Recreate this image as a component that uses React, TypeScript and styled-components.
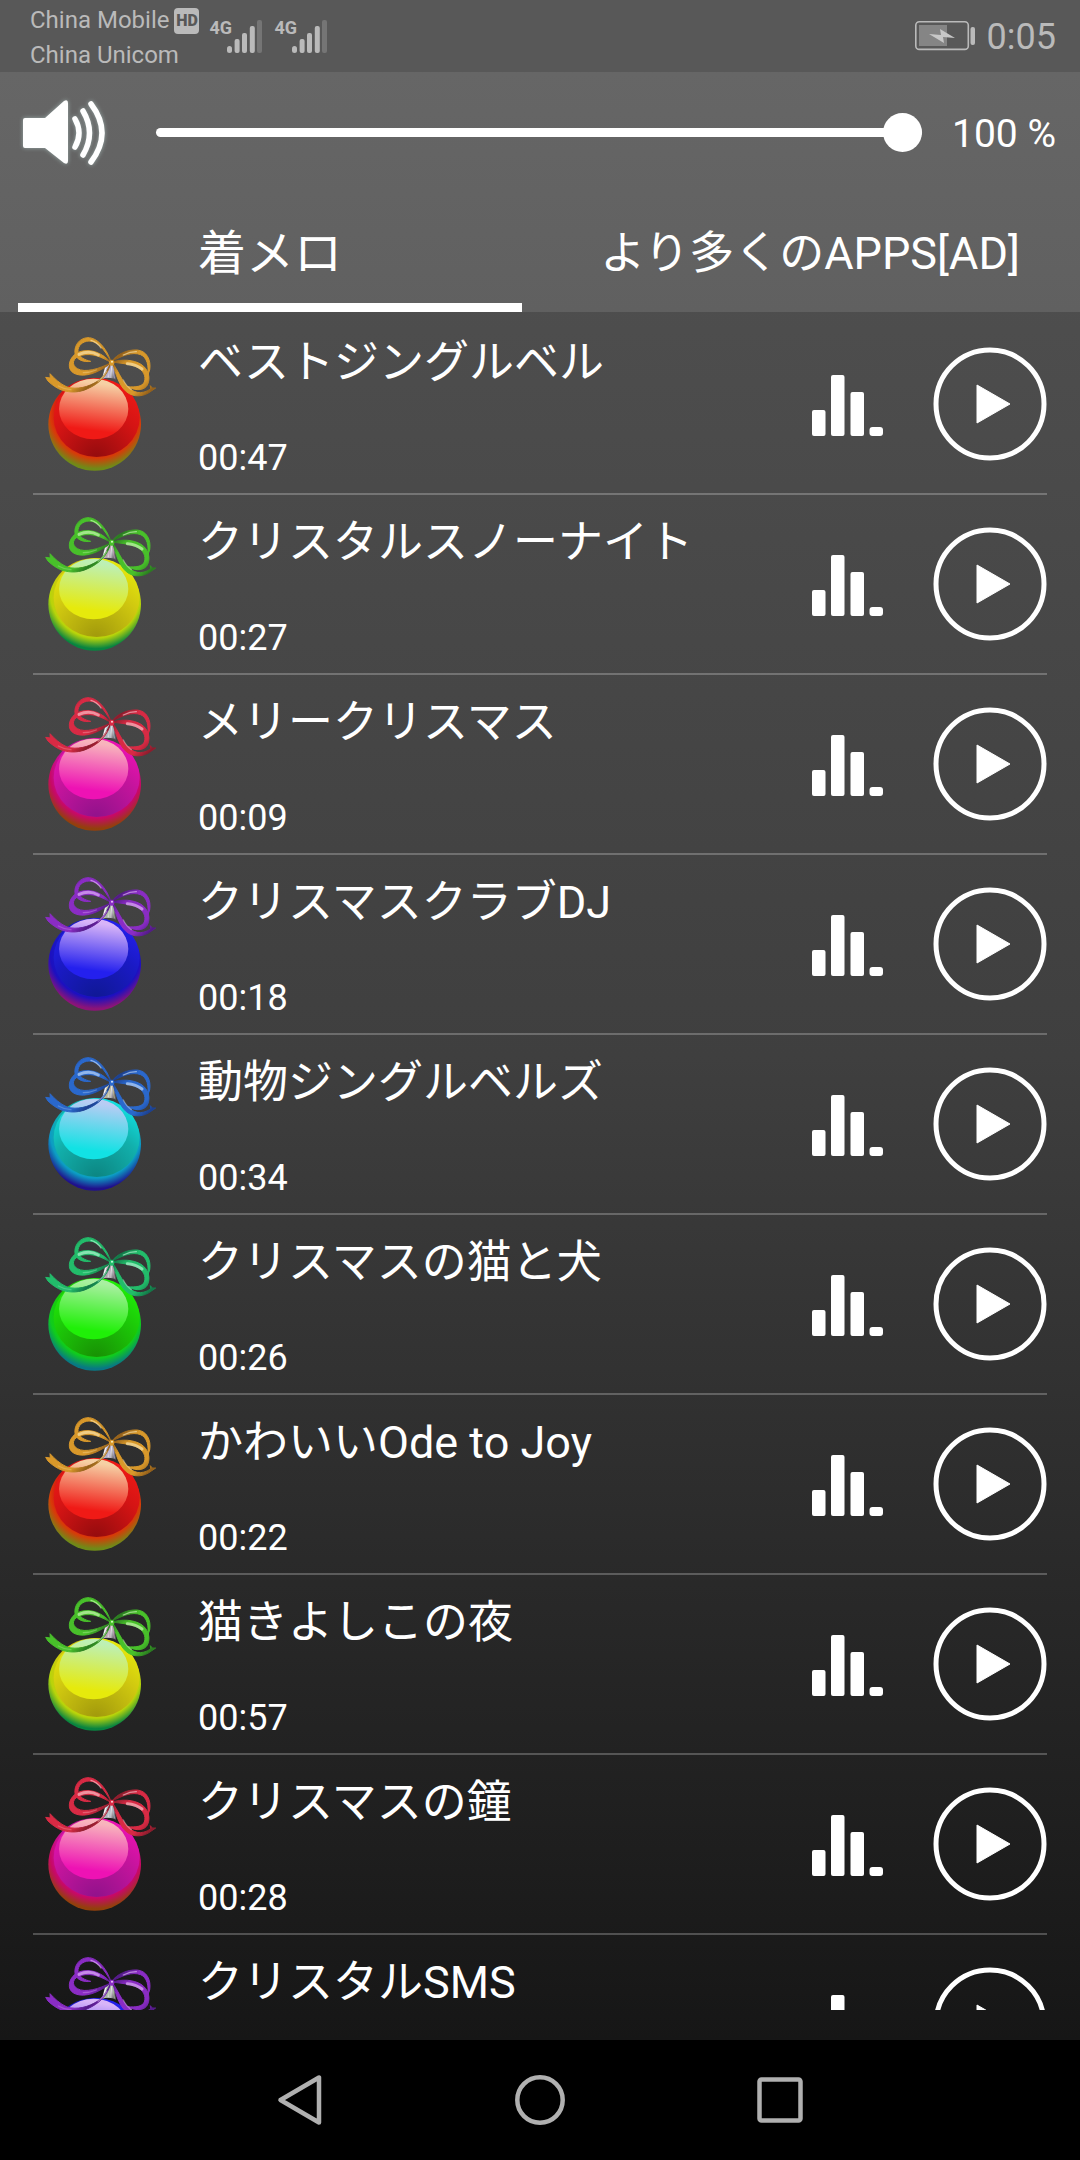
import React, { useState } from "react";
import styled, { createGlobalStyle } from "styled-components";

const GlobalStyle = createGlobalStyle`
  *, *::before, *::after { box-sizing: border-box; }
  html, body { margin: 0; background: #000; }
  body, button, input {
    font-family: Roboto, "Noto Sans CJK JP", sans-serif;
  }
  button {
    padding: 0;
    border: 0;
    background: none;
    color: inherit;
    cursor: pointer;
  }
  svg { display: block; flex: none; }
`;

const Screen = styled.div`
  display: flex;
  flex-direction: column;
  height: 100vh;
  color: #fff;
`;

const StatusBar = styled.header`
  display: flex;
  align-items: center;
  justify-content: space-between;
  height: 72px;
  padding: 0 24px 0 30px;
  background: #585858;
  color: #bababa;
`;

const StatusGroup = styled.div`
  display: flex;
  align-items: center;
  gap: 12px;
`;

const Carriers = styled.div`
  padding-top: 4px;
  font-size: 24px;
  line-height: 35px;
`;

const Carrier = styled.div`
  display: flex;
  align-items: center;
  gap: 5px;
  height: 35px;
`;

const HdBadge = styled.span`
  width: 25px;
  height: 26px;
  border-radius: 4px;
  background: #bababa;
  color: #585858;
  font-size: 16px;
  font-weight: 900;
  line-height: 26px;
  text-align: center;
`;

const Signals = styled.div`
  display: flex;
  gap: 12px;
  margin-left: -2px;
`;

const Signal = styled.div`
  display: flex;
  align-items: flex-start;
  width: 53px;
  font-family: "Liberation Sans Narrow", Roboto, sans-serif;
  font-size: 18px;
  font-weight: 700;
  line-height: 18px;

  span { width: 18px; }
`;

const Clock = styled.time`
  padding-top: 2px;
  font-size: 36px;
  line-height: 42px;
`;

const Content = styled.main`
  display: flex;
  flex: 1;
  flex-direction: column;
  min-height: 0;
  padding-bottom: 30px;
  background: linear-gradient(#525252, #3f3f3f 50%, #161616);
`;

const Controls = styled.section`
  flex: none;
  background: linear-gradient(#666, #606060);
`;

const VolumeRow = styled.div`
  display: flex;
  align-items: center;
  height: 120px;
  padding: 0 24px 0 18px;
`;

const Slider = styled.input`
  flex: 1;
  min-width: 0;
  height: 39px;
  margin: 0 30px 0 48px;
  appearance: none;
  background: transparent;

  &::-webkit-slider-runnable-track {
    height: 9px;
    border-radius: 5px;
    background: #fff;
  }
  &::-webkit-slider-thumb {
    width: 39px;
    height: 39px;
    margin-top: -15px;
    border-radius: 50%;
    appearance: none;
    background: #fff;
  }
`;

const VolumeValue = styled.output`
  min-width: 104px;
  padding-top: 4px;
  font-size: 39px;
  line-height: 46px;
  text-align: right;
`;

const Tabs = styled.div`
  display: grid;
  grid-template-columns: 1fr 1fr;
  gap: 36px;
  height: 120px;
  padding: 0 18px;
`;

const Tab = styled.button<{ $active: boolean; $large?: boolean }>`
  padding-top: 12px;
  border-bottom: 9px solid ${(p) => (p.$active ? "#fff" : "transparent")};
  font-size: ${(p) => (p.$large ? 48 : 45)}px;
  line-height: 54px;
  white-space: nowrap;
`;

const TrackList = styled.ul`
  flex: 1;
  min-height: 0;
  margin: 0;
  padding: 3px 33px 0;
  overflow-y: auto;
  list-style: none;
  scrollbar-width: none;
`;

const TrackRow = styled.li`
  display: flex;
  align-items: center;
  height: 180px;
  border-bottom: 2px solid rgba(255, 255, 255, 0.24);
`;

const TrackText = styled.div`
  display: flex;
  flex: 1;
  flex-direction: column;
  align-self: stretch;
  justify-content: space-between;
  min-width: 0;
  padding: 21px 0 14px 28px;
`;

const TrackTitle = styled.span`
  font-size: 45px;
  line-height: 54px;
  white-space: nowrap;
`;

const Duration = styled.time`
  font-size: 36px;
  line-height: 42px;
`;

const Level = styled.span`
  padding-top: 3px;
`;

const PlayButton = styled.button`
  margin-left: 50px;
`;

const NavBar = styled.nav`
  display: flex;
  flex: none;
  justify-content: center;
  height: 120px;
  background: #000;
`;

const NavButton = styled.button`
  display: flex;
  flex: 0 1 240px;
  align-items: center;
  justify-content: center;
`;

interface Palette {
  ribbon: string;
  ribbonDark: string;
  shine: string;
  cap: string;
  top: string;
  bright: string;
  side: string;
  deep: string;
  ring: string;
  rim: string;
}

const palettes: Palette[] = [
  { ribbon: "#d8982a", ribbonDark: "#94601a", shine: "#fff0c0", cap: "#aaa6c8", top: "#f6d0a4", bright: "#f01a16", side: "#d41414", deep: "#980c0e", ring: "#d83a08", rim: "#6f8a18" },
  { ribbon: "#48c02a", ribbonDark: "#2a7c20", shine: "#dcffc8", cap: "#b79cac", top: "#bdf0b4", bright: "#e6ea0c", side: "#d0c810", deep: "#a49c0c", ring: "#b8d40a", rim: "#088440" },
  { ribbon: "#d82a44", ribbonDark: "#8c1c2c", shine: "#ffd6dc", cap: "#a4b2bc", top: "#f8b4bc", bright: "#ee12b4", side: "#c4149c", deep: "#94128c", ring: "#c80868", rim: "#92400c" },
  { ribbon: "#8a2cc4", ribbonDark: "#521a88", shine: "#edc8ff", cap: "#a3b49c", top: "#d8b4f8", bright: "#2420ee", side: "#1a1ac4", deep: "#101898", ring: "#1c10c0", rim: "#8c1478" },
  { ribbon: "#2a68cc", ribbonDark: "#1c4090", shine: "#d4e8ff", cap: "#b4b08c", top: "#b8ccf4", bright: "#12e2e4", side: "#12b0ac", deep: "#0c8884", ring: "#0c9cc4", rim: "#20108c" },
  { ribbon: "#22bc6a", ribbonDark: "#127848", shine: "#c8ffe0", cap: "#ac9ca8", top: "#a8f0a0", bright: "#20f008", side: "#1cc808", deep: "#189404", ring: "#10cc1c", rim: "#087884" },
];

interface Track {
  title: string;
  duration?: string;
  palette: number;
}

const tracks: Track[] = [
  { title: "ベストジングルベル", duration: "00:47", palette: 0 },
  { title: "クリスタルスノーナイト", duration: "00:27", palette: 1 },
  { title: "メリークリスマス", duration: "00:09", palette: 2 },
  { title: "クリスマスクラブDJ", duration: "00:18", palette: 3 },
  { title: "動物ジングルベルズ", duration: "00:34", palette: 4 },
  { title: "クリスマスの猫と犬", duration: "00:26", palette: 5 },
  { title: "かわいいOde to Joy", duration: "00:22", palette: 0 },
  { title: "猫きよしこの夜", duration: "00:57", palette: 1 },
  { title: "クリスマスの鐘", duration: "00:28", palette: 2 },
  { title: "クリスタルSMS", palette: 3 },
];

function Ornament({ id, colors: c }: { id: string; colors: Palette }) {
  return (
    <svg width="137" height="160" viewBox="9 -3 411 480" aria-hidden="true">
      <defs>
        <radialGradient id={`${id}-body`} gradientUnits="userSpaceOnUse" cx="198" cy="262" r="176">
          <stop offset="0.66" stopColor={c.side} />
          <stop offset="0.78" stopColor={c.ring} />
          <stop offset="0.96" stopColor={c.rim} />
        </radialGradient>
        <radialGradient id={`${id}-inner`} gradientUnits="userSpaceOnUse" cx="200" cy="400" r="240">
          <stop offset="0.05" stopColor={c.deep} />
          <stop offset="0.6" stopColor={c.side} />
          <stop offset="1" stopColor={c.bright} />
        </radialGradient>
        <linearGradient id={`${id}-gloss`} x1="0.6" y1="0" x2="0.45" y2="1">
          <stop offset="0.08" stopColor={c.top} />
          <stop offset="0.85" stopColor={c.bright} />
        </linearGradient>
        <linearGradient id={`${id}-cap`} x1="0" y1="0" x2="1" y2="0.3">
          <stop offset="0" stopColor="#5c5860" />
          <stop offset="0.3" stopColor="#f4f2f6" />
          <stop offset="0.5" stopColor={c.cap} />
          <stop offset="0.7" stopColor="#e6e4ea" />
          <stop offset="1" stopColor="#68646c" />
        </linearGradient>
        <linearGradient id={`${id}-ribbon`} gradientUnits="userSpaceOnUse" x1="120" y1="40" x2="170" y2="90" spreadMethod="reflect">
          <stop offset="0" stopColor={c.ribbonDark} />
          <stop offset="0.45" stopColor={c.ribbon} />
          <stop offset="1" stopColor={c.ribbon} />
        </linearGradient>
      </defs>
      <circle cx="194" cy="298" r="139" fill={`url(#${id}-body)`} />
      <ellipse cx="200" cy="278" rx="129" ry="118" fill={`url(#${id}-inner)`} />
      <ellipse cx="191" cy="252" rx="104" ry="91" fill={`url(#${id}-gloss)`} />
      <path d="M226 122q15-8 27 2l5 40q-18-10-42-3z" fill={`url(#${id}-cap)`} />
      <path d="M233 124l-9 35M241 123l-2 36M248 124l5 36" stroke={c.cap} strokeWidth="3" />
      <g fill={`url(#${id}-ribbon)`} fillRule="evenodd" stroke={`url(#${id}-ribbon)`} strokeWidth="3" strokeLinejoin="round">
        <path d="M243 110C228 66 200 38 174 38c-27 1-42 24-39 48 5 20 28 26 47 23-17-4-35-12-38-29-1-18 13-31 33-32 26 0 47 26 66 62z" />
        <path d="M243 113C217 84 185 71 153 79c-29 8-40 36-33 53 9 21 45 24 79 9 17-8 34-18 44-28-35 19-78 31-101 18-19-11-15-33 12-40 32-8 62 5 89 22z" />
        <path d="M246 108C261 88 291 73 321 75c29 2 43 30 38 60-2 6-4 10-5 14 2-27-2-51-22-60-26-10-55 4-86 19z" />
        <path d="M246 111c29-9 65-7 87 7 22 14 28 39 21 58-8 21-35 23-61 9 24 2 44 0 50-14 6-18-3-37-27-47-21-8-44-9-70-13z" />
        <path d="M242 113c-7 37-36 64-69 78-23 11-50 13-76 5-16-6-31-16-43-28l-7-11 14 2-1-13c13 14 30 31 51 40 31 9 64 0 91-17 20-14 32-35 40-56z" />
        <path d="M247 112c16 24 27 51 42 69 20 23 44 30 73 11l-1-10 6 7 10 0-13 9c-22 18-53 20-75 2-22-19-30-49-42-88z" />
      </g>
      <g fill="none" stroke={c.shine} strokeLinecap="round" strokeWidth="4" opacity="0.6">
        <path d="M147 88q31-13 58 2" strokeWidth="9" />
        <path d="M292 116q26 2 44 16" strokeWidth="9" />
        <path d="M183 46q18 5 30 23" />
        <path d="M280 90q20-10 39-10" />
        <path d="M160 143q20 0 39-8" opacity="0.5" />
        <path d="M205 169q17-13 25-30" opacity="0.7" />
        <path d="M280 165q10 20 24 29" opacity="0.7" />
        <path d="M85 183q17 10 38 11" opacity="0.4" />
      </g>
      <ellipse cx="245" cy="113" rx="8" ry="9" fill={c.ribbon} />
      <circle cx="246" cy="110" r="3" fill={c.shine} />
    </svg>
  );
}

function SignalBars() {
  return (
    <svg width="35" height="34" viewBox="0 0 35 34" fill="currentColor" aria-hidden="true">
      <rect x="0" y="27" width="5" height="7" rx="2.5" />
      <rect x="7.6" y="20" width="5" height="14" rx="2" />
      <rect x="15" y="14" width="5" height="20" rx="2" />
      <rect x="22.8" y="7" width="5" height="27" rx="2" />
      <rect x="30" y="1" width="5" height="33" rx="2" opacity="0.3" />
    </svg>
  );
}

function BatteryIcon() {
  return (
    <svg width="60" height="30" viewBox="0 0 60 30" aria-hidden="true">
      <rect x="0.8" y="0.8" width="52.500" height="27.6" rx="3.5" fill="none" stroke="#bababa" strokeWidth="1.6" />
      <rect x="4" y="4" width="28" height="21" fill="#858585" />
      <rect x="55.500" y="6" width="4.5" height="18" rx="2" fill="#bababa" />
      <path d="M14 13l12 1-1-6 15 9-12-1 1 6z" fill="#c8c8c8" />
    </svg>
  );
}

function SpeakerIcon() {
  return (
    <svg
      width="90"
      height="76"
      viewBox="0 0 90 76"
      aria-hidden="true"
      style={{ filter: "drop-shadow(0 0 2px rgba(220,255,250,.45))" }}
    >
      <path d="M7 24h20L46 7q4-2 4 2v58q0 4-4 2L27 54H7q-2 0-2-2V26q0-2 2-2z" fill="#fff" />
      <g fill="none" stroke="#fff" strokeLinecap="round" strokeWidth="5.5">
        <path d="M57 25q8 14 0 28" />
        <path d="M65 17q13 22 0 44" />
        <path d="M73 10q22 29 0 58" />
      </g>
    </svg>
  );
}

function EqualizerIcon() {
  return (
    <svg width="71" height="61" viewBox="0 0 71 61" fill="#fff" aria-hidden="true">
      <rect x="0" y="35" width="13.5" height="26" rx="2" />
      <rect x="19" y="0" width="13.5" height="61" rx="2" />
      <rect x="38.5" y="17" width="13.5" height="44" rx="2" />
      <rect x="57.5" y="52" width="13.5" height="9" rx="3" />
    </svg>
  );
}

function PlayIcon() {
  return (
    <svg width="114" height="114" viewBox="0 0 114 114" aria-hidden="true">
      <circle cx="57" cy="57" r="54" fill="none" stroke="#fff" strokeWidth="5" />
      <path d="M44 38L77 57L44 76z" fill="#fff" stroke="#fff" strokeLinejoin="round" />
    </svg>
  );
}

export default function App() {
  const [volume, setVolume] = useState(100);
  const [tab, setTab] = useState(0);

  return (
    <Screen>
      <GlobalStyle />
      <StatusBar>
        <StatusGroup>
          <Carriers>
            <Carrier>
              China Mobile <HdBadge>HD</HdBadge>
            </Carrier>
            <Carrier>China Unicom</Carrier>
          </Carriers>
          <Signals>
            <Signal><span>4G</span><SignalBars /></Signal>
            <Signal><span>4G</span><SignalBars /></Signal>
          </Signals>
        </StatusGroup>
        <StatusGroup>
          <BatteryIcon />
          <Clock>0:05</Clock>
        </StatusGroup>
      </StatusBar>

      <Content>
        <Controls>
          <VolumeRow>
            <SpeakerIcon />
            <Slider
              type="range"
              min={0}
              max={100}
              value={volume}
              aria-label="音量"
              onChange={(e) => setVolume(Number(e.target.value))}
            />
            <VolumeValue>{`${volume} %`}</VolumeValue>
          </VolumeRow>
          <Tabs role="tablist">
            <Tab role="tab" $large $active={tab === 0} aria-selected={tab === 0} onClick={() => setTab(0)}>
              着メロ
            </Tab>
            <Tab role="tab" $active={tab === 1} aria-selected={tab === 1} onClick={() => setTab(1)}>
              より多くのAPPS[AD]
            </Tab>
          </Tabs>
        </Controls>

        <TrackList>
          {tracks.map((track, i) => (
            <TrackRow key={track.title}>
              <Ornament id={`ball-${i}`} colors={palettes[track.palette]} />
              <TrackText>
                <TrackTitle>{track.title}</TrackTitle>
                {track.duration && <Duration>{track.duration}</Duration>}
              </TrackText>
              <Level>
                <EqualizerIcon />
              </Level>
              <PlayButton aria-label={`${track.title} 再生`}>
                <PlayIcon />
              </PlayButton>
            </TrackRow>
          ))}
        </TrackList>
      </Content>

      <NavBar>
        <NavButton aria-label="戻る">
          <svg width="50" height="54" viewBox="0 0 50 54" fill="none" stroke="#b0b0b0" strokeWidth="4.5" strokeLinejoin="round">
            <path d="M44 4.500V49.500L5.500 27z" />
          </svg>
        </NavButton>
        <NavButton aria-label="ホーム">
          <svg width="50" height="50" viewBox="0 0 50 50" fill="none" stroke="#b0b0b0" strokeWidth="4.5">
            <circle cx="25" cy="25" r="22.700" />
          </svg>
        </NavButton>
        <NavButton aria-label="履歴">
          <svg width="46" height="46" viewBox="0 0 46 46" fill="none" stroke="#b0b0b0" strokeWidth="4.5">
            <rect x="2.500" y="2.500" width="41" height="41" rx="2" />
          </svg>
        </NavButton>
      </NavBar>
    </Screen>
  );
}
